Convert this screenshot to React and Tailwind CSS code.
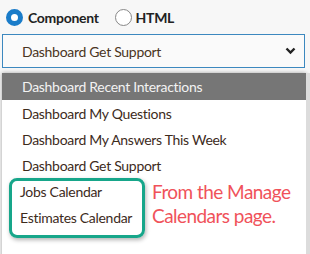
import React from "react";

const items = [
  "Dashboard Recent Interactions",
  "Dashboard My Questions",
  "Dashboard My Answers This Week",
  "Dashboard Get Support",
];

export default function App() {
  return (
    <div className="w-[310px] h-[254px] overflow-hidden bg-[#f7f7f7] font-['Lato',sans-serif] text-[#333] relative tracking-[-0.3px]">
      <div className="flex items-center h-[34px] pl-[6px] pt-[1px]">
        <span className="w-[17px] h-[17px] rounded-full border-[5px] border-[#1a7cc9] bg-white" />
        <span className="ml-[5px] text-[14px] font-bold text-[#222]">Component</span>
        <span className="ml-[16px] w-[17px] h-[17px] rounded-full border border-[#888] bg-white" />
        <span className="ml-[4px] text-[14px] font-bold text-[#222]">HTML</span>
      </div>
      <div className="mx-[2px] mr-[5px] h-[34px] border border-[#3c88bf] bg-[#fafafa] flex items-center justify-between pl-[19px] pr-[8px]">
        <span className="text-[14px] text-[#4a3522]">Dashboard Get Support</span>
        <svg width="11" height="8" viewBox="0 0 11 8">
          <path d="M1.5 1.5 L5.5 5.5 L9.5 1.5" stroke="#222" strokeWidth="2.4" fill="none" />
        </svg>
      </div>
      <div className="mt-[5px] ml-[2px] w-[304px] h-[200px] bg-white shadow-[0_0_4px_rgba(0,0,0,0.35)] relative">
        {items.map((t, i) => (
          <div
            key={t}
            className={`flex items-center pl-[20px] text-[14px] ${i === 0 ? "bg-[#767676] text-[#f2f2f2] h-[27px]" : "text-[#3d2b1c] h-[26px]"}`}
          >
            {t}
          </div>
        ))}
        <div className="flex items-start">
          <div className="ml-[7px] w-[136px] h-[60px] border-[3px] border-[#17a68a] rounded-[8px] shadow-[1px_2px_4px_rgba(0,0,0,0.3)] flex flex-col pl-[8px] text-[14px] text-[#3d2b1c]">
            <div className="h-[20px] flex items-center">Jobs Calendar</div>
            <div className="h-[32px] flex items-center">Estimates Calendar</div>
          </div>
          <div className="ml-[7px] mt-[2px] text-[19px] leading-[24px] text-[#f0525a] tracking-[-0.55px]">
            From the Manage<br />Calendars page.
          </div>
        </div>
      </div>
      <div className="absolute right-0 top-[73px] w-[4px] h-[181px] bg-[#dcdcdc]" />
    </div>
  );
}
